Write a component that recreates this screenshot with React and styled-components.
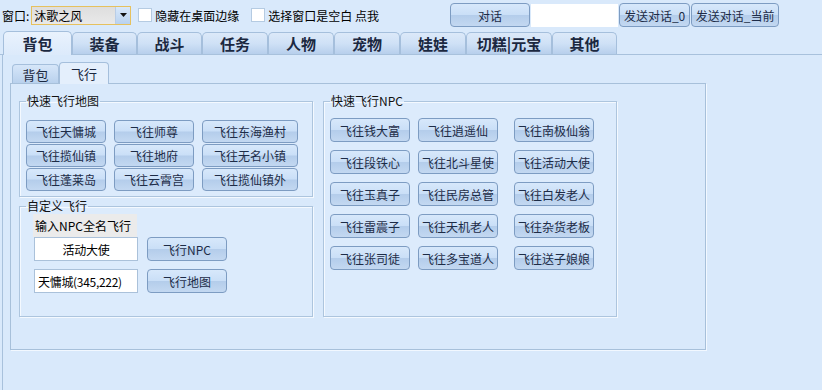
import React from 'react'
import styled, { createGlobalStyle } from 'styled-components'

const GlobalStyle = createGlobalStyle`
  html, body { margin: 0; padding: 0; }
  body {
    font-family: "Noto Sans CJK SC", "Noto Sans", sans-serif;
    font-size: 12px;
    color: #000;
    background: #d9e9fb;
  }
`

const mainTabs = [
  { label: '背包', width: 69, active: true },
  { label: '装备', width: 65 },
  { label: '战斗', width: 65 },
  { label: '任务', width: 66 },
  { label: '人物', width: 66 },
  { label: '宠物', width: 66 },
  { label: '娃娃', width: 66 },
  { label: '切糕|元宝', width: 86 },
  { label: '其他', width: 65 },
]

const mapButtons = [
  '飞往天慵城', '飞往师尊', '飞往东海渔村',
  '飞往揽仙镇', '飞往地府', '飞往无名小镇',
  '飞往蓬莱岛', '飞往云霄宫', '飞往揽仙镇外',
]

const npcButtons = [
  '飞往钱大富', '飞往逍遥仙', '飞往南极仙翁',
  '飞往段铁心', '飞往北斗星使', '飞往活动大使',
  '飞往玉真子', '飞往民房总管', '飞往白发老人',
  '飞往雷震子', '飞往天机老人', '飞往杂货老板',
  '飞往张司徒', '飞往多宝道人', '飞往送子娘娘',
]

function App() {
  return (
    <Page>
      <GlobalStyle />
      <TopBar>
        <span>窗口:</span>
        <Combo>
          <ComboText>沐歌之风</ComboText>
          <ComboArrow>
            <svg width="7" height="4" viewBox="0 0 7 4"><path d="M0 0h7L3.5 4z" fill="#111" /></svg>
          </ComboArrow>
        </Combo>
        <Check />
        <CheckLabel>隐藏在桌面边缘</CheckLabel>
        <Check $gap={12} />
        <CheckLabel>选择窗口是空白 点我</CheckLabel>
        <ChatGroup>
          <Button $w={80} $h={24}>对话</Button>
          <ChatInput />
          <Button $w={71} $h={24}>发送对话_0</Button>
          <Button $w={88} $h={24}>发送对话_当前</Button>
        </ChatGroup>
      </TopBar>

      <TabStrip>
        {mainTabs.map(t => (
          <MainTab key={t.label} $w={t.width} $active={t.active}>{t.label}</MainTab>
        ))}
      </TabStrip>

      <Content>
        <SubTabStrip>
          <SubTab $w={47}>背包</SubTab>
          <SubTab $w={50} $active>飞行</SubTab>
        </SubTabStrip>
        <Panel>
          <LeftColumn>
            <Group>
              <Legend>快速飞行地图</Legend>
              <MapGrid>
                {mapButtons.map((b, i) => (
                  <Button key={b} $w={i % 3 === 2 ? 96 : 80} $h={23}>{b}</Button>
                ))}
              </MapGrid>
            </Group>
            <CustomGroup>
              <Legend>自定义飞行</Legend>
              <CustomBody>
                <FieldLabel>输入NPC全名飞行</FieldLabel>
                <FieldRow>
                  <TextBox $center>活动大使</TextBox>
                  <Button $w={80} $h={24}>飞行NPC</Button>
                </FieldRow>
                <FieldRow $top={8}>
                  <TextBox>天慵城(345,222)</TextBox>
                  <Button $w={80} $h={24}>飞行地图</Button>
                </FieldRow>
              </CustomBody>
            </CustomGroup>
          </LeftColumn>
          <NpcGroup>
            <Legend>快速飞行NPC</Legend>
            <NpcGrid>
              {npcButtons.map(b => (
                <Button key={b} $w={80} $h={24}>{b}</Button>
              ))}
            </NpcGrid>
          </NpcGroup>
        </Panel>
      </Content>
    </Page>
  )
}

export default App

const Page = styled.div`
  width: 822px;
  height: 390px;
  overflow: hidden;
  background: #d9e9fb;
  display: flex;
  flex-direction: column;
`

const TopBar = styled.div`
  height: 30px;
  display: flex;
  align-items: center;
  padding-left: 2px;
  color: #000;
  white-space: nowrap;
`

const Combo = styled.div`
  width: 100px;
  height: 19px;
  margin-left: 2px;
  box-sizing: border-box;
  border: 1px solid #e6c15e;
  background: linear-gradient(#dedede, #e9e9e9);
  display: flex;
  align-items: center;
`

const ComboText = styled.span`
  flex: 1;
  padding-left: 2px;
`

const ComboArrow = styled.div`
  width: 15px;
  height: 17px;
  box-sizing: border-box;
  border-left: 1px solid #b9cde6;
  background: linear-gradient(#d8e8fb, #b9d2ef);
  display: flex;
  align-items: center;
  justify-content: center;
`

const Check = styled.div`
  width: 14px;
  height: 14px;
  box-sizing: border-box;
  margin-left: ${p => p.$gap || 7}px;
  background: #fff;
  border: 1px solid #b5cbe2;
`

const CheckLabel = styled.span`
  margin-left: 3px;
`

const ChatGroup = styled.div`
  display: flex;
  align-items: center;
  gap: 1px;
  margin-left: 71px;
`

const ChatInput = styled.div`
  width: 87px;
  height: 23px;
  background: #fff;
`

const Button = styled.div`
  width: ${p => p.$w}px;
  height: ${p => p.$h}px;
  box-sizing: border-box;
  border: 1px solid #7d9cc2;
  border-radius: 4px;
  background: linear-gradient(#d7e8fb 0%, #cadff7 48%, #b4cdeb 52%, #c3d8f1 100%);
  color: #1d2c47;
  font-size: 12px;
  display: flex;
  align-items: center;
  justify-content: center;
  white-space: nowrap;
  cursor: default;
`

const TabStrip = styled.div`
  height: 24px;
  display: flex;
  align-items: flex-end;
  padding-left: 3px;
  border-bottom: 1px solid #a8c1dc;
`

const MainTab = styled.div`
  width: ${p => p.$w}px;
  height: ${p => (p.$active ? 24 : 22)}px;
  margin-bottom: ${p => (p.$active ? -1 : 0)}px;
  box-sizing: border-box;
  border: 1px solid #a5bfdc;
  border-bottom: none;
  border-radius: 5px 5px 0 0;
  background: ${p => (p.$active
    ? 'linear-gradient(#e9f2fd, #dceafb)'
    : 'linear-gradient(#dce9f9 0%, #cfe1f6 50%, #b7cfec 100%)')};
  color: #1b2840;
  font-size: 15px;
  font-weight: bold;
  display: flex;
  align-items: center;
  justify-content: center;
  padding-bottom: ${p => (p.$active ? 1 : 0)}px;
`

const Content = styled.div`
  flex: 1;
  margin-left: 2px;
  border-left: 1px solid #a8c1dc;
  padding: 6px 0 0 7px;
`

const SubTabStrip = styled.div`
  height: 22px;
  display: flex;
  align-items: flex-end;
  padding-left: 2px;
`

const SubTab = styled.div`
  width: ${p => p.$w}px;
  height: ${p => (p.$active ? 22 : 19)}px;
  margin-bottom: ${p => (p.$active ? -1 : 0)}px;
  box-sizing: border-box;
  border: 1px solid #a5bfdc;
  border-bottom: none;
  border-radius: 4px 4px 0 0;
  background: ${p => (p.$active
    ? '#e4effc'
    : 'linear-gradient(#d6e6f9, #b9d1ed)')};
  color: #1b2840;
  font-size: 13px;
  display: flex;
  align-items: center;
  justify-content: center;
  position: relative;
`

const Panel = styled.div`
  width: 696px;
  height: 267px;
  box-sizing: border-box;
  border: 1px solid #a7c0da;
  box-shadow: 1px 1px 0 #f2f8ff;
  padding: 10px 0 32px 8px;
  display: flex;
  align-items: stretch;
  gap: 10px;
`

const LeftColumn = styled.div`
  width: 294px;
  display: flex;
  flex-direction: column;
  gap: 2px;
`

const Group = styled.fieldset`
  margin: 0;
  min-width: 0;
  box-sizing: border-box;
  width: 294px;
  border: 1px solid #adc5de;
  box-shadow: inset 1px 1px 0 #f4f9ff, 1px 1px 0 #f4f9ff;
  background: #dcebfc;
  padding: 12px 0 5px 6px;
`

const CustomGroup = styled(Group)`
  flex: 1;
  padding: 1px 0 0 6px;
`

const CustomBody = styled.div`
  padding-left: 7px;
`

const NpcGroup = styled(Group)`
  padding: 10px 0 0 6px;
`

const Legend = styled.legend`
  padding: 0 1px;
  font-size: 12px;
  line-height: 14px;
  color: #111;
`

const MapGrid = styled.div`
  display: grid;
  grid-template-columns: 88px 88px 96px;
  grid-auto-rows: 23px;
  row-gap: 1px;
`

const NpcGrid = styled.div`
  display: grid;
  grid-template-columns: 88px 96px 80px;
  grid-auto-rows: 24px;
  row-gap: 8px;
`

const FieldLabel = styled.div`
  width: 104px;
  height: 23px;
  box-sizing: border-box;
  background: #ebebeb;
  line-height: 23px;
  padding-left: 2px;
  color: #000;
`

const FieldRow = styled.div`
  display: flex;
  align-items: center;
  gap: 9px;
  margin-top: ${p => p.$top || 0}px;
  padding-left: 1px;
`

const TextBox = styled.div`
  width: 104px;
  height: 24px;
  box-sizing: border-box;
  background: #fff;
  border: 1px solid #aac1da;
  display: flex;
  align-items: center;
  justify-content: ${p => (p.$center ? 'center' : 'flex-start')};
  padding-left: ${p => (p.$center ? 0 : 3)}px;
  white-space: nowrap;
  overflow: hidden;
  letter-spacing: -0.3px;
`
